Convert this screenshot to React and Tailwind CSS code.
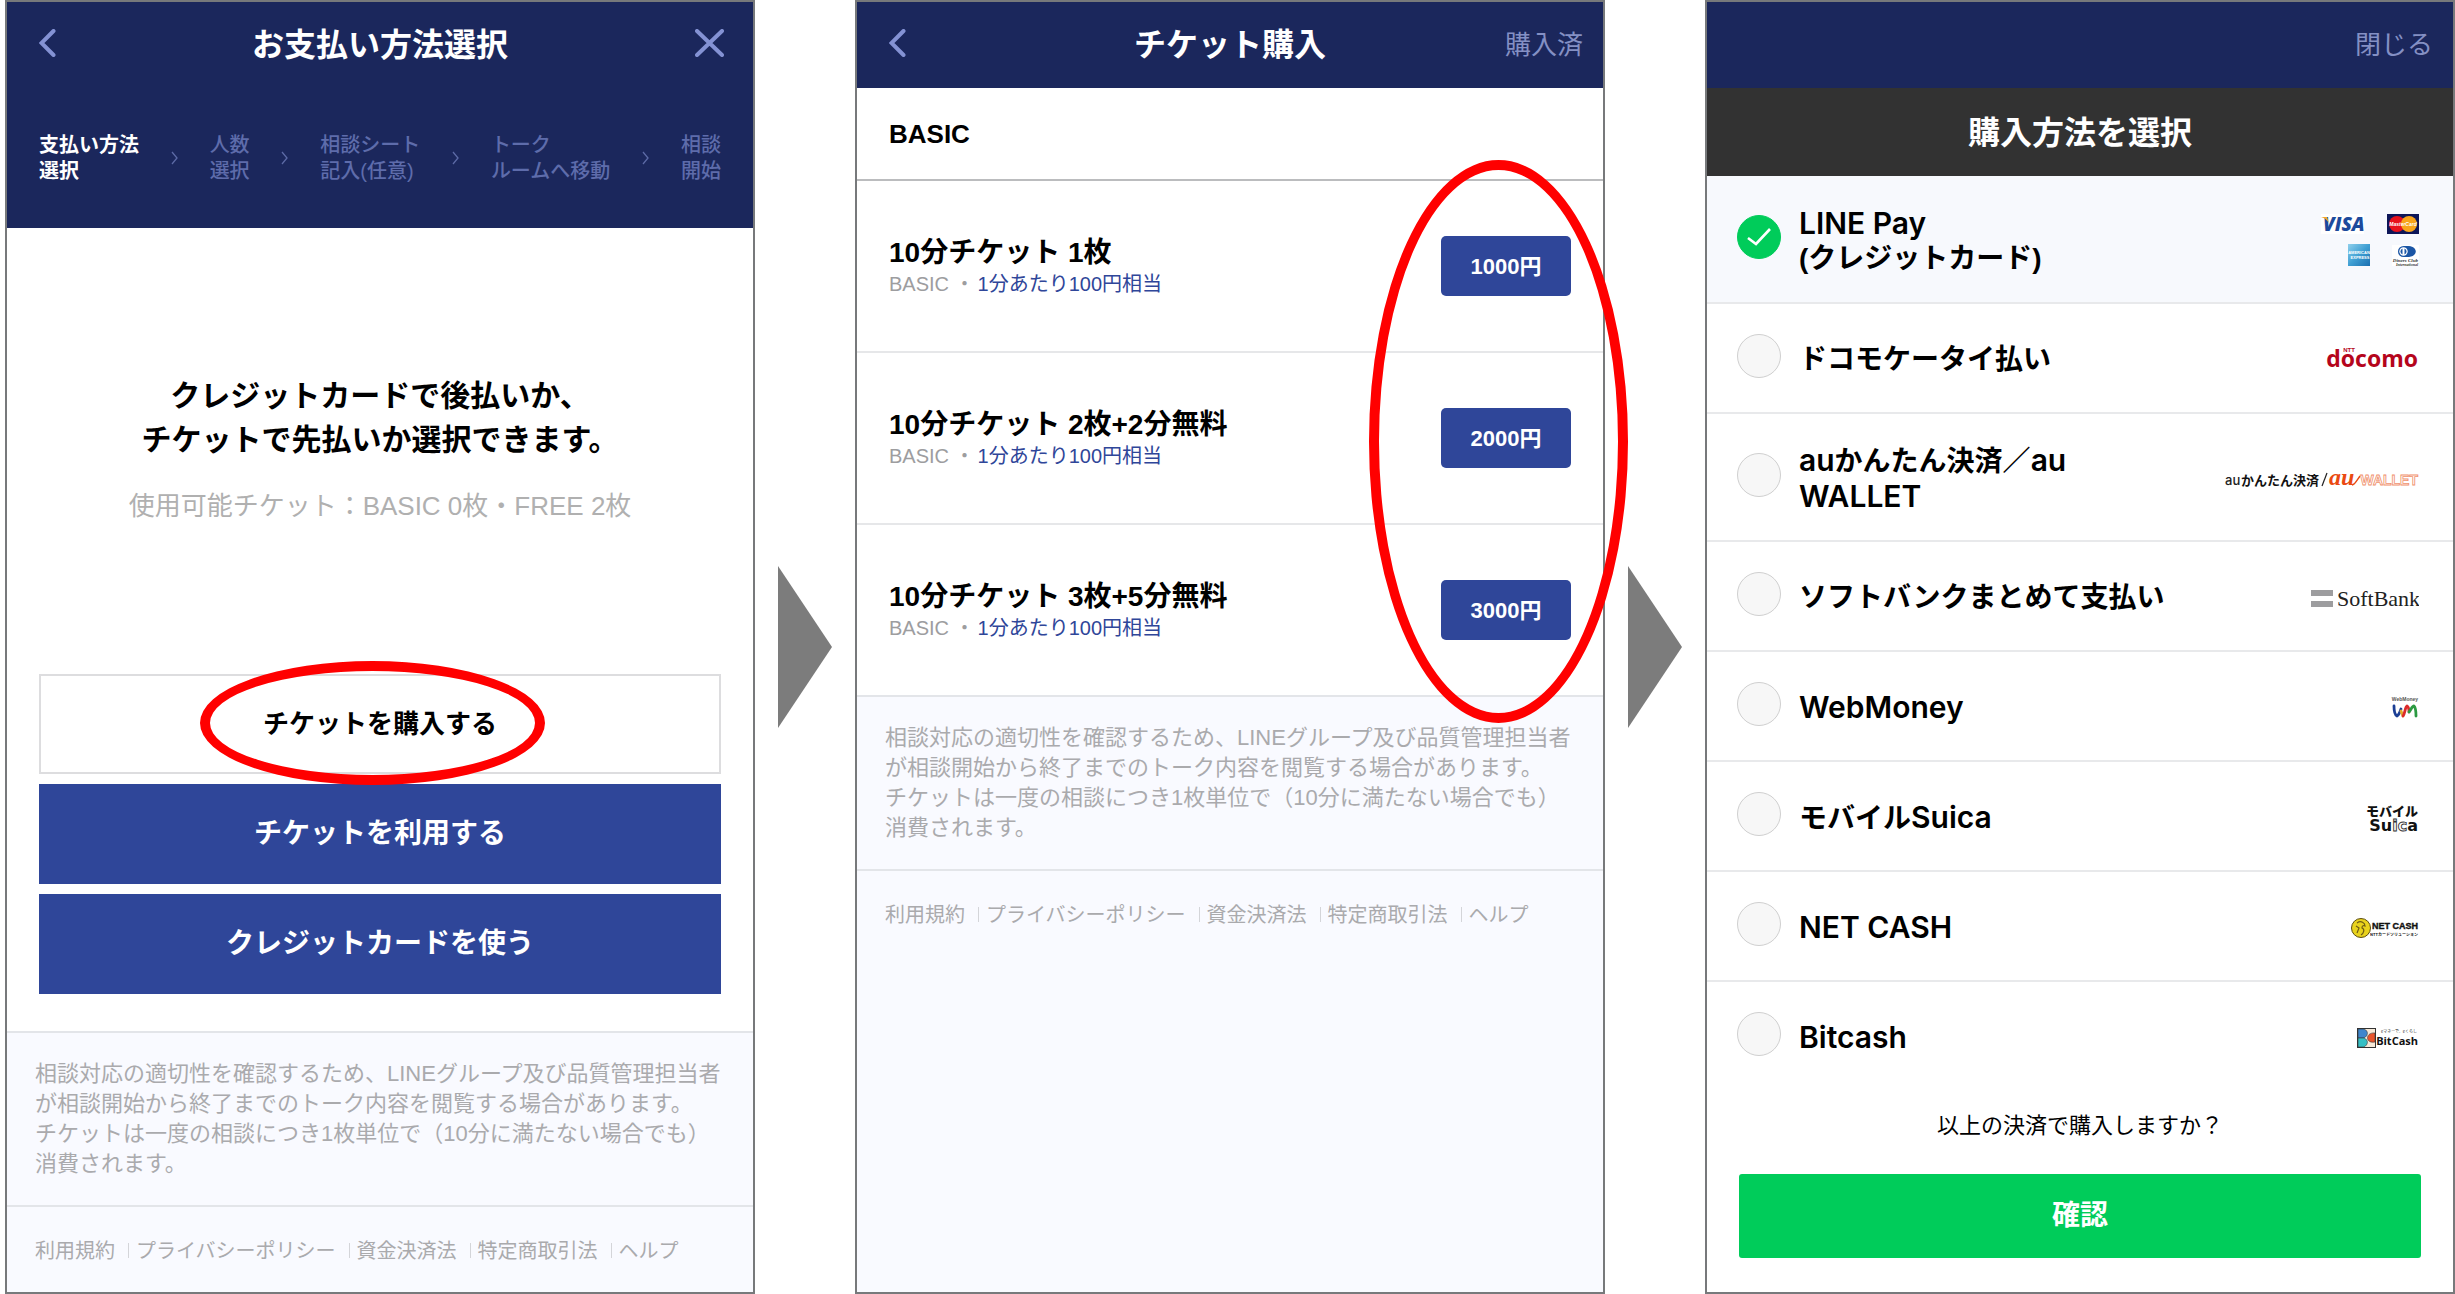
import { useState } from 'react';

const NOTICE = [
  '相談対応の適切性を確認するため、LINEグループ及び品質管理担当者',
  'が相談開始から終了までのトーク内容を閲覧する場合があります。',
  'チケットは一度の相談につき1枚単位で（10分に満たない場合でも）',
  '消費されます。',
];

const FOOTER_LINKS = ['利用規約', 'プライバシーポリシー', '資金決済法', '特定商取引法', 'ヘルプ'];

const STEPS = [
  ['支払い方法', '選択'],
  ['人数', '選択'],
  ['相談シート', '記入(任意)'],
  ['トーク', 'ルームへ移動'],
  ['相談', '開始'],
];

const TICKETS = [
  { name: '10分チケット 1枚', price: '1000円' },
  { name: '10分チケット 2枚+2分無料', price: '2000円' },
  { name: '10分チケット 3枚+5分無料', price: '3000円' },
];

/* ---------- shared parts ---------- */

function Panel({ children, className = '' }) {
  return (
    <section className={`flex min-w-0 flex-1 flex-col border-2 border-[#77797b] ${className}`}>
      {children}
    </section>
  );
}

function Arrow() {
  return (
    <div className="flex w-[100px] shrink-0 items-center pl-[23px]">
      <svg width="54" height="162" viewBox="0 0 54 162" aria-hidden="true">
        <path d="M0 0L54 81L0 162Z" fill="#7c7c7c" />
      </svg>
    </div>
  );
}

function BackButton() {
  return (
    <button type="button" aria-label="戻る" className="pb-1">
      <svg width="17" height="28" viewBox="0 0 17 28" fill="none" aria-hidden="true">
        <path d="M14.500 2L2.500 14L14.500 26" stroke="#8492d4" strokeWidth="4" strokeLinecap="round" />
      </svg>
    </button>
  );
}

function TitleBar({ left, title, right }) {
  return (
    <div className="grid h-[86px] grid-cols-[1fr_auto_1fr] items-center bg-[#1b275c]">
      <div className="flex pl-8">{left}</div>
      <h1 className="text-[32px] leading-10 font-bold text-white">{title}</h1>
      <div className="flex justify-end">{right}</div>
    </div>
  );
}

function Footer({ grow = false }) {
  return (
    <footer className={`bg-[#f9faff] text-[#aaaaad] ${grow ? 'flex-1' : ''}`}>
      <p className="border-t-2 border-[#e3e5e9] px-7 pt-[26px] pb-[26px] text-[22px] leading-[30px] whitespace-nowrap">
        {NOTICE.map((line) => (
          <span key={line} className="block h-[30px]">{line}</span>
        ))}
      </p>
      <nav className="flex h-[87px] items-center border-t-2 border-[#e3e5e9] px-7 pt-[2px] text-[20px] leading-6">
        {FOOTER_LINKS.map((link, i) => (
          <span key={link} className="flex items-center">
            {i > 0 && <span className="mr-[7px] ml-[13px] h-[15px] w-px bg-[#d4d5d9]" />}
            <a href="#" className="whitespace-nowrap">{link}</a>
          </span>
        ))}
      </nav>
    </footer>
  );
}

/* ---------- 1: payment method ---------- */

function StepNav() {
  return (
    <ol className="flex items-center justify-between bg-[#1b275c] px-8 pt-11 pb-11 text-[20px] leading-[26px]">
      {STEPS.map((step, i) => (
        <li key={step[0]} className="contents">
          {i > 0 && (
            <svg width="7" height="14" viewBox="0 0 7 14" fill="none" aria-hidden="true">
              <path d="M1 1L6 7L1 13" stroke="#5c6aa6" strokeWidth="1.3" />
            </svg>
          )}
          <span className={`whitespace-nowrap ${i === 0 ? 'font-bold text-white' : 'font-medium text-[#5e6cab]'}`}>
            <span className="block h-[26px]">{step[0]}</span>
            <span className="block h-[26px]">{step[1]}</span>
          </span>
        </li>
      ))}
    </ol>
  );
}

function PaymentPanel() {
  return (
    <Panel className="bg-white">
      <TitleBar
        left={<BackButton />}
        title="お支払い方法選択"
        right={
          <button type="button" aria-label="閉じる" className="pr-[29px] pb-1">
            <svg width="29" height="28" viewBox="0 0 29 28" fill="none" aria-hidden="true">
              <path d="M2 2L27 26M27 2L2 26" stroke="#8492d4" strokeWidth="4" strokeLinecap="round" />
            </svg>
          </button>
        }
      />
      <StepNav />
      <div className="flex flex-1 flex-col px-8 pb-[37px] text-center">
        <div className="flex flex-1 flex-col pt-[146px]">
          <h2 className="text-[30px] leading-[44px] font-bold text-black">
            クレジットカードで後払いか、
            <br />
            チケットで先払いか選択できます。
          </h2>
          <p className="mt-6 text-[26px] leading-10 text-[#b0b0b0]">
            使用可能チケット：BASIC 0枚・FREE 2枚
          </p>
        </div>
        <div className="flex flex-col gap-[10px]">
          <div className="relative">
            <button type="button" className="h-[100px] w-full border-2 border-[#dddddf] bg-white text-[26px] font-bold text-black">
              チケットを購入する
            </button>
            <div className="pointer-events-none absolute -top-[13px] left-1/2 -ml-[180px] h-[124px] w-[345px] rounded-[50%] border-10 border-[#ff0000]" />
          </div>
          <button type="button" className="h-[100px] bg-[#2f4699] text-[28px] font-bold text-white">
            チケットを利用する
          </button>
          <button type="button" className="h-[100px] bg-[#2f4699] text-[28px] font-bold text-white">
            クレジットカードを使う
          </button>
        </div>
      </div>
      <Footer />
    </Panel>
  );
}

/* ---------- 2: ticket list ---------- */

function TicketPanel() {
  return (
    <Panel className="bg-white">
      <TitleBar
        left={<BackButton />}
        title="チケット購入"
        right={<button type="button" className="pr-5 text-[26px] leading-10 text-[#8490c4]">購入済</button>}
      />
      <h2 className="flex h-[93px] items-center border-b-2 border-[#bbbcbe] px-8 text-[26px] leading-10 font-bold text-black">
        BASIC
      </h2>
      <div className="relative">
        <ul>
          {TICKETS.map((ticket, i) => (
            <li
              key={ticket.price}
              className={`flex items-center justify-between px-8 ${i > 0 ? 'h-[172px] border-t-2 border-[#e6e7e9]' : 'h-[170px]'}`}
            >
              <div>
                <h3 className="h-9 text-[28px] leading-9 font-bold text-black">{ticket.name}</h3>
                <p className="h-[26px] text-[20px] leading-[26px] text-[#9d9d9f]">
                  BASIC ・<span className="ml-[3px] text-[#2f4699]">1分あたり100円相当</span>
                </p>
              </div>
              <button type="button" className="h-[60px] w-[130px] rounded-[5px] bg-[#2f4699] text-[22px] font-bold text-white">
                {ticket.price}
              </button>
            </li>
          ))}
        </ul>
        <div className="pointer-events-none absolute -top-[21px] -right-[25px] h-[563px] w-[259px] rounded-[50%] border-10 border-[#ff0000]" />
      </div>
      <Footer grow />
    </Panel>
  );
}

/* ---------- 3: purchase method ---------- */

function CardBrands() {
  return (
    <svg width="108" height="60" viewBox="-10 -2 108 60" role="img" aria-label="VISA MasterCard American Express Diners Club">
      <defs>
        <linearGradient id="amex" x1="0" y1="0" x2="1" y2="1">
          <stop offset="0" stopColor="#8fd0ec" />
          <stop offset="0.5" stopColor="#3f9fd3" />
          <stop offset="1" stopColor="#1b6fb0" />
        </linearGradient>
      </defs>
      <rect x="0" y="1" width="43" height="20" fill="#fff" />
      <text x="2" y="18" fontSize="19" className="font-['Open_Sans',sans-serif] font-extrabold italic" fill="#1c4a9c">VISA</text>
      <path d="M0 4H6L8 10C6 7 4 5 0 4Z" fill="#f0a92c" />

      <rect x="66" y="1" width="32" height="20" fill="#0d1658" />
      <circle cx="76" cy="11" r="8" fill="#e8111c" />
      <circle cx="88" cy="11" r="8" fill="#f9a51a" />
      <text x="82" y="13" fontSize="5" textAnchor="middle" className="font-['Liberation_Sans',sans-serif] font-bold italic" fill="#fff">MasterCard</text>

      <rect x="27" y="31" width="22" height="22" fill="url(#amex)" />
      <text x="38" y="41" fontSize="4" textAnchor="middle" className="font-['Liberation_Sans',sans-serif] font-bold" fill="#fff">AMERICAN</text>
      <text x="39" y="46" fontSize="4" textAnchor="middle" className="font-['Liberation_Sans',sans-serif] font-bold" fill="#fff">EXPRESS</text>

      <rect x="71" y="32" width="27" height="21" fill="#fff" />
      <path d="M83 33H88C97 34 97 43 88 44H83Z" fill="#1b56a5" />
      <circle cx="82.500" cy="38.500" r="5.500" fill="#1b56a5" />
      <circle cx="82.500" cy="38.500" r="4.200" fill="#fff" />
      <path d="M81.500 35.500A3.200 3.200 0 0 0 81.500 41.500ZM83.500 35.500A3.200 3.200 0 0 1 83.500 41.500Z" fill="#1b56a5" />
      <text x="97" y="49" fontSize="5" textAnchor="end" className="font-['Liberation_Serif',serif] font-bold italic" fill="#333">Diners Club</text>
      <text x="97" y="53" fontSize="4" textAnchor="end" className="font-['Liberation_Serif',serif] font-bold italic" fill="#333">International</text>
    </svg>
  );
}

function DocomoLogo() {
  return (
    <svg width="110" height="44" viewBox="-18 -8 110 44" role="img" aria-label="NTT docomo">
      <text x="91" y="21" fontSize="23" textAnchor="end" className="font-['Open_Sans',sans-serif] font-bold" fill="#b5051c">docomo</text>
      <text x="22" y="6" fontSize="6" textAnchor="middle" className="font-['Liberation_Sans',sans-serif] font-bold" fill="#b5051c">NTT</text>
    </svg>
  );
}

function AuLogo() {
  return (
    <svg width="204" height="40" viewBox="-10 -9 204 40" role="img" aria-label="auかんたん決済 / au WALLET">
      <text x="0" y="17" fontSize="13" className="font-['Inter',sans-serif] font-medium" fill="#222">au</text>
      <text x="16" y="17" fontSize="13" className="font-['Noto_Sans_CJK_JP',sans-serif] font-bold" fill="#111">かんたん決済</text>
      <path d="M97 18L102 5" stroke="#222" strokeWidth="1.2" />
      <text x="104" y="17" fontSize="24" className="font-['Liberation_Serif',serif] font-bold italic" fill="#ea4a12">au</text>
      <path d="M127 17C130 17 132 12 135 8" stroke="#ea4a12" strokeWidth="1.4" fill="none" />
      <text x="193" y="17" fontSize="14" textAnchor="end" className="font-['Liberation_Sans',sans-serif] font-bold" fill="#fff" stroke="#f0906c" strokeWidth="0.8">WALLET</text>
    </svg>
  );
}

function SoftBankLogo() {
  return (
    <svg width="119" height="40" viewBox="-10 -8 119 40" role="img" aria-label="SoftBank">
      <rect x="1" y="4" width="22" height="6" fill="#9d9d9f" />
      <rect x="1" y="15" width="22" height="6" fill="#9d9d9f" />
      <text x="27" y="20" fontSize="22" className="font-['Liberation_Serif',serif]" fill="#222">SoftBank</text>
    </svg>
  );
}

function WebMoneyLogo() {
  return (
    <svg width="37" height="26" viewBox="-9 -2 37 26" fill="none" strokeWidth="2.800" strokeLinecap="round" strokeLinejoin="round" role="img" aria-label="WebMoney">
      <text x="14" y="4" fontSize="5" textAnchor="middle" className="font-['Liberation_Sans',sans-serif] font-bold" fill="#555">WebMoney</text>
      <path d="M3 9C3 14 4 18 6 19C8 18 9 15 10 12" stroke="#1c3f94" />
      <path d="M10 14L12 19" stroke="#e3a92c" />
      <path d="M12 19C14 17 14 10 16 9C18 10 18 13 18 15" stroke="#dc2a2a" />
      <path d="M18 15C20 13 21 9 23 9C25 11 25 15 25 19" stroke="#2c9a42" />
    </svg>
  );
}

function SuicaLogo() {
  return (
    <svg width="61" height="42" viewBox="-10 -7 61 42" role="img" aria-label="モバイルSuica">
      <text x="50" y="12" fontSize="13" textAnchor="end" className="font-['Noto_Sans_CJK_JP',sans-serif] font-black" fill="#111">モバイル</text>
      <text x="50" y="27" fontSize="16" textAnchor="end" className="font-['DejaVu_Sans',sans-serif] font-bold" fill="#111">
        Su<tspan fill="#fff" stroke="#333" strokeWidth="0.9">ic</tspan>a
      </text>
    </svg>
  );
}

function NetCashLogo() {
  return (
    <svg width="79" height="26" viewBox="-10 -2 79 26" role="img" aria-label="NET CASH NTTカードソリューション">
      <circle cx="11" cy="11" r="9.500" fill="#e8d21c" stroke="#5c4d10" />
      <path d="M7 6C11 3 15 6 15 9C13 8 12 9 12 11C15 12 14 16 11 18M6 9L9 11L7 16" stroke="#6e5c14" strokeWidth="1.2" fill="none" />
      <text x="68" y="12" fontSize="9" textAnchor="end" className="font-['Liberation_Sans',sans-serif] font-bold" fill="#111" stroke="#111" strokeWidth="0.4">NET CASH</text>
      <text x="68" y="19" fontSize="4" textAnchor="end" className="font-['Noto_Sans_CJK_JP',sans-serif] font-bold" fill="#111">NTTカードソリューション</text>
    </svg>
  );
}

function BitCashLogo() {
  return (
    <svg width="72" height="28" viewBox="-9 -3 72 28" role="img" aria-label="BitCash">
      <rect x="1.500" y="1.500" width="18" height="19" fill="#f6e9d8" stroke="#333" />
      <path d="M2 2H8C13 4 12 9 8 11H2Z" fill="#3f86cc" stroke="#333" strokeWidth="0.6" />
      <path d="M2 11H8C13 13 12 18 8 20H2Z" fill="#35bfc4" stroke="#333" strokeWidth="0.6" />
      <path d="M19 6C9 5 9 17 19 15Z" fill="#e8542c" stroke="#333" strokeWidth="0.6" />
      <text x="61" y="6" fontSize="4" textAnchor="end" className="font-['Noto_Sans_CJK_JP',sans-serif]" fill="#333">eマネーで、eくらし</text>
      <text x="62" y="18" fontSize="11" textAnchor="end" className="font-['Open_Sans',sans-serif] font-bold" fill="#111">BitCash</text>
    </svg>
  );
}

// Latin part of a label, set a little larger than the kana next to it
function En({ children }) {
  return <span className="font-['Inter',sans-serif] text-[30px] font-semibold">{children}</span>;
}

const METHODS = [
  { id: 'linepay', label: <><En>LINE Pay</En><br />(クレジットカード)</>, Logo: CardBrands, tall: true },
  { id: 'docomo', label: 'ドコモケータイ払い', Logo: DocomoLogo },
  { id: 'au', label: <><En>au</En>かんたん決済／<En>au</En><br /><En>WALLET</En></>, Logo: AuLogo, tall: true },
  { id: 'softbank', label: 'ソフトバンクまとめて支払い', Logo: SoftBankLogo },
  { id: 'webmoney', label: <En>WebMoney</En>, Logo: WebMoneyLogo },
  { id: 'suica', label: <>モバイル<En>Suica</En></>, Logo: SuicaLogo },
  { id: 'netcash', label: <En>NET CASH</En>, Logo: NetCashLogo },
  { id: 'bitcash', label: <En>Bitcash</En>, Logo: BitCashLogo },
];

function MethodRow({ method, checked, last, onSelect }) {
  const { id, label, Logo, tall } = method;
  return (
    <li className={last ? '' : 'border-b-2 border-[#e8e9eb]'}>
      <label
        className={`flex items-center gap-[18px] pt-1 pr-[34px] pl-[30px] ${tall ? 'h-[126px]' : 'h-[108px]'} ${checked ? 'bg-[#f7f9fd]' : ''}`}
      >
        <span className="grid shrink-0 place-items-center pb-2">
          <input
            type="radio"
            name="method"
            value={id}
            checked={checked}
            onChange={() => onSelect(id)}
            className="col-start-1 row-start-1 size-11 appearance-none rounded-full border border-[#cfcfcf] bg-[#f7f7f7] checked:border-[#00cc5a] checked:bg-[#00cc5a]"
          />
          {checked && (
            <svg className="col-start-1 row-start-1" width="24" height="18" viewBox="0 0 24 18" fill="none" aria-hidden="true">
              <path d="M1 10L9 16L23 1" stroke="#fff" strokeWidth="2.6" />
            </svg>
          )}
        </span>
        <span className="flex-1 text-[28px] leading-[34px] font-bold text-black">{label}</span>
        <Logo />
      </label>
    </li>
  );
}

function MethodPanel() {
  const [selected, setSelected] = useState('linepay');

  return (
    <Panel className="bg-white">
      <div className="flex h-[86px] items-center justify-end bg-[#1b275c]">
        <button type="button" className="pr-5 text-[26px] leading-10 text-[#8490c4]">閉じる</button>
      </div>
      <h1 className="flex h-[88px] items-center justify-center bg-[#323232] pt-[2px] text-[32px] leading-10 font-bold text-white">
        購入方法を選択
      </h1>
      <ul>
        {METHODS.map((method, i) => (
          <MethodRow
            key={method.id}
            method={method}
            checked={selected === method.id}
            last={i === METHODS.length - 1}
            onSelect={setSelected}
          />
        ))}
      </ul>
      <div className="flex flex-col px-8 pt-5 pb-[34px] text-center">
        <p className="text-[22px] leading-8 text-black">以上の決済で購入しますか？</p>
        <button type="button" className="mt-8 h-[84px] rounded-[3px] bg-[#00cc5a] text-[28px] font-bold text-white">
          確認
        </button>
      </div>
    </Panel>
  );
}

export default function App() {
  return (
    <main lang="ja" className="flex min-h-screen bg-white pl-[5px] font-['Liberation_Sans','Noto_Sans_CJK_JP',sans-serif]">
      <PaymentPanel />
      <Arrow />
      <TicketPanel />
      <Arrow />
      <MethodPanel />
    </main>
  );
}
